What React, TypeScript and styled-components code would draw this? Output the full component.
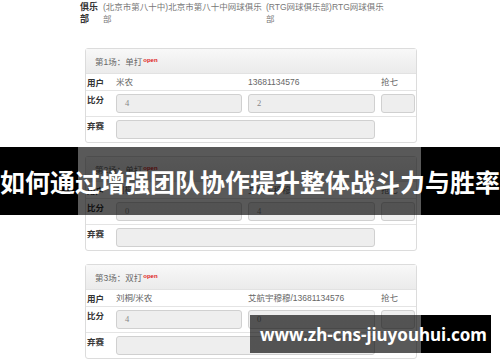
import styled, { createGlobalStyle } from "styled-components";

const GlobalStyle = createGlobalStyle`
    html, body {
        margin: 0;
        padding: 0;
        background: #fff;
    }
    body {
        font-family: "Liberation Sans", "Noto Sans CJK SC", sans-serif;
    }
`

const Page = styled.div`
    position: relative;
    width: 500px;
    height: 362px;
    overflow: hidden;
    background: #fff;
`

const Content = styled.div`
    padding: 2px 0 0 80px;
`

const ClubRow = styled.div`
    display: grid;
    grid-template-columns: 23px 163px 130px;
    font-size: 8.5px;
    line-height: 11.5px;
    color: #777;
`

const ClubLabel = styled.div`
    font-weight: 700;
    color: #333;
    font-size: 9px;
`

const Matches = styled.div`
    display: flex;
    flex-direction: column;
    gap: 13px;
    margin: 23px 0 0 5px;
    width: 332px;
`

const Card = styled.div`
    border: 1px solid #dcdcdc;
    border-radius: 3px;
    background: #fff;
`

const CardHeader = styled.div`
    height: 24px;
    display: flex;
    align-items: center;
    padding-left: 9px;
    background: linear-gradient(#f8f8f8, #ebebeb);
    border-bottom: 1px solid #e2e2e2;
    font-size: 8.5px;
    color: #666;
`

const Open = styled.sup`
    color: #e01e1e;
    font-size: 6px;
    font-weight: 700;
    margin-left: 1px;
    position: relative;
    top: -1px;
`

const Row = styled.div<{ $h: number; $last?: boolean }>`
    display: grid;
    grid-template-columns: 24px 126px 127px 34px;
    column-gap: 6px;
    align-items: start;
    height: ${(p) => p.$h}px;
    box-sizing: border-box;
    padding: ${(p) => (p.$h > 20 ? "3px 0" : "0")};
    border-bottom: ${(p) => (p.$last ? "none" : "1px solid #e4e4e4")};
    font-size: 8.5px;
    color: #666;
`

const Label = styled.div<{ $pad?: number }>`
    font-weight: 700;
    color: #333;
    padding: ${(p) => p.$pad ?? 0}px 0 0 1px;
    line-height: 12px;
`

const Value = styled.div`
    line-height: 17px;
    white-space: nowrap;
`

const Field = styled.div<{ $wide?: boolean }>`
    grid-column: ${(p) => (p.$wide ? "span 2" : "auto")};
    height: 19px;
    box-sizing: border-box;
    border: 1px solid #d0d0d0;
    border-radius: 3px;
    background: #eeeeee;
    padding-left: 8px;
    font-size: 8.5px;
    line-height: 17px;
    color: #888;
    font-family: "Liberation Serif", serif;
`

const TitleBanner = styled.div`
    position: absolute;
    left: 0;
    top: 147px;
    width: 500px;
    height: 68px;
    display: flex;
    align-items: center;
    justify-content: center;
    background: linear-gradient(
        to right,
        #000 78px,
        rgba(0, 0, 0, 0.65) 78px,
        rgba(0, 0, 0, 0.65) 421px,
        #000 421px
    );
    color: #fff;
    font-family: "Noto Sans CJK SC", sans-serif;
    font-weight: 700;
    font-size: 25px;
    white-space: nowrap;
`

const UrlBanner = styled.div`
    position: absolute;
    left: 250px;
    top: 315px;
    width: 241px;
    height: 38px;
    box-sizing: border-box;
    padding-left: 10px;
    display: flex;
    align-items: center;
    background: linear-gradient(
        to right,
        rgba(0, 0, 0, 0.65) 171px,
        #000 171px
    );
    color: #fff;
    font-family: "Noto Sans", sans-serif;
    font-weight: 700;
    font-size: 17px;
    white-space: nowrap;
`

type Match = {
    title: string;
    home: string;
    away: string;
    scores: [string, string];
}

const matches: Match[] = [
    { title: "第1场：单打", home: "米农", away: "13681134576", scores: ["4", "2"] },
    { title: "第2场：单打", home: "刘桐", away: "艾航宇穆穆", scores: ["0", "4"] },
    { title: "第3场：双打", home: "刘桐/米农", away: "艾航宇穆穆/13681134576", scores: ["4", "0"] },
]

const MatchCard = ({ m }: { m: Match }) => (
    <Card>
        <CardHeader>
            {m.title}
            <Open>open</Open>
        </CardHeader>
        <Row $h={17}>
            <Label $pad={3}>用户</Label>
            <Value>{m.home}</Value>
            <Value>{m.away}</Value>
            <Value>抢七</Value>
        </Row>
        <Row $h={26}>
            <Label>比分</Label>
            <Field>{m.scores[0]}</Field>
            <Field>{m.scores[1]}</Field>
            <Field />
        </Row>
        <Row $h={25} $last>
            <Label>弃赛</Label>
            <Field $wide />
        </Row>
    </Card>
)

export default function App() {
    return (
        <Page>
            <GlobalStyle />
            <Content>
                <ClubRow>
                    <ClubLabel>俱乐<br />部</ClubLabel>
                    <div>(北京市第八十中)北京市第八十中网球俱乐<br />部</div>
                    <div>(RTG网球俱乐部)RTG网球俱乐<br />部</div>
                </ClubRow>
                <Matches>
                    {matches.map((m) => (
                        <MatchCard key={m.title} m={m} />
                    ))}
                </Matches>
            </Content>
            <TitleBanner>如何通过增强团队协作提升整体战斗力与胜率</TitleBanner>
            <UrlBanner>www.zh-cns-jiuyouhui.com</UrlBanner>
        </Page>
    )
}
